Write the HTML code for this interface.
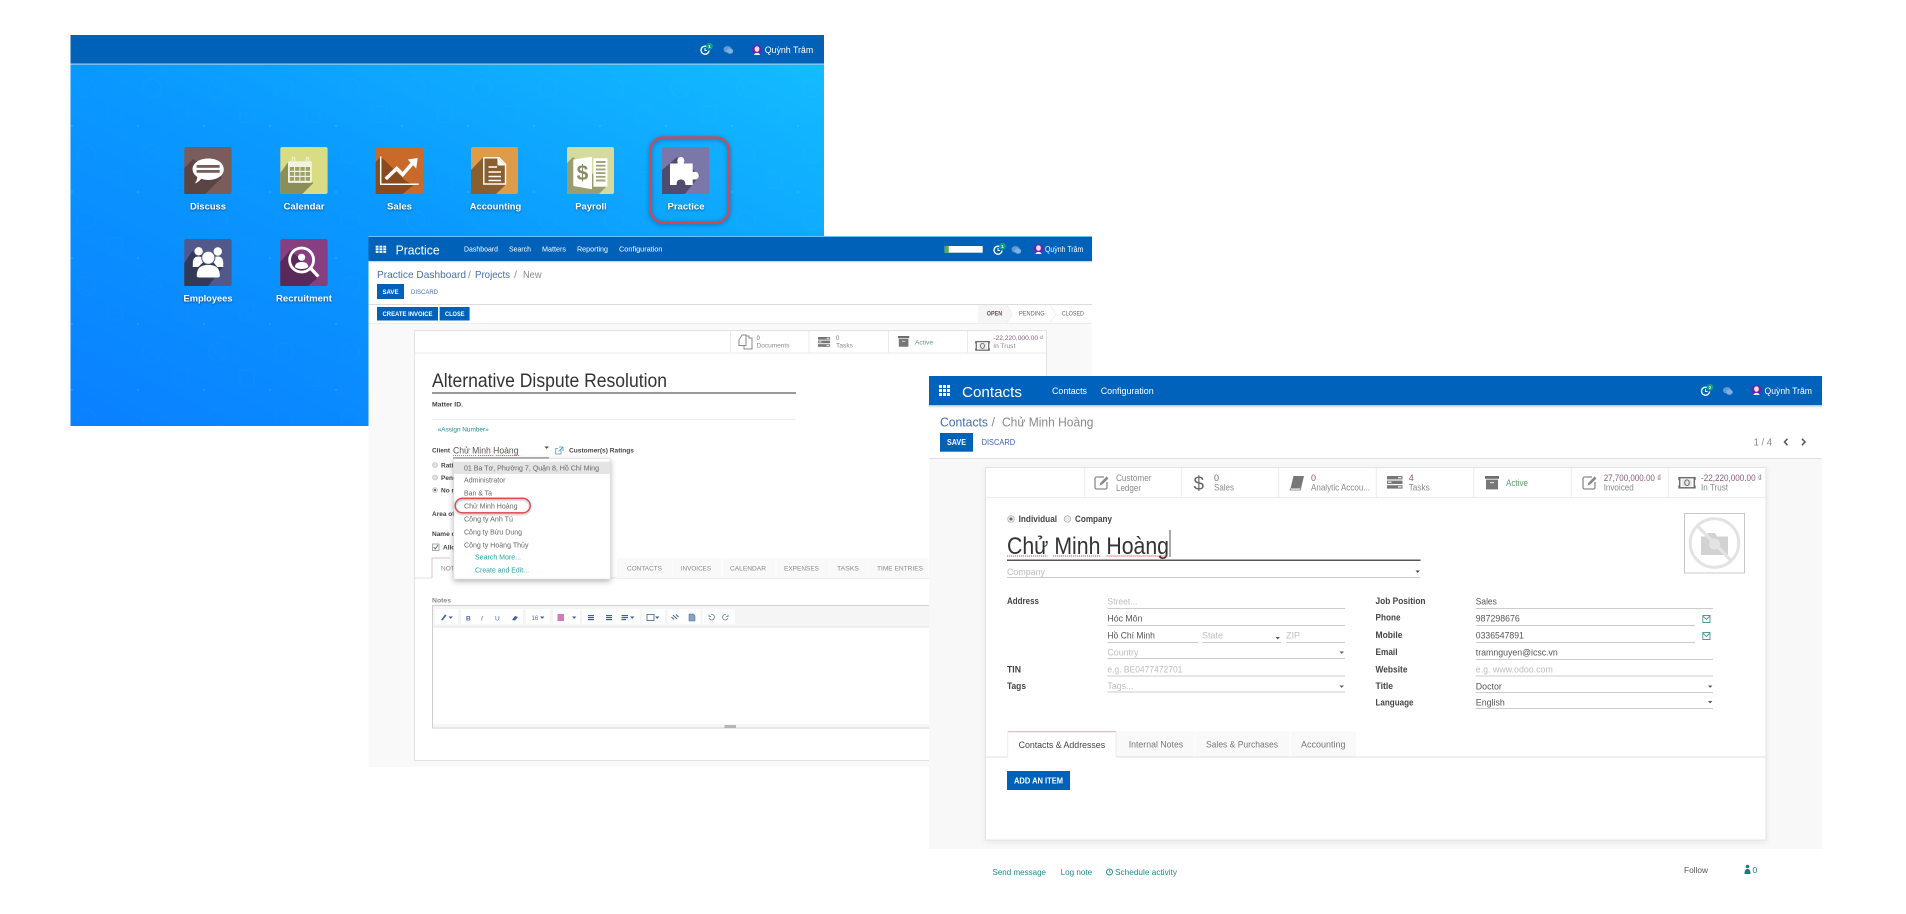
<!DOCTYPE html>
<html lang="vi"><head><meta charset="utf-8"><title>Practice</title>
<style>
html,body{margin:0;padding:0;background:#fff;width:1906px;height:914px;overflow:hidden}
svg{display:block;filter:blur(.25px)}
text{font-family:"Liberation Sans","DejaVu Sans",sans-serif;fill:#555}
.w{fill:#fff}.b{font-weight:bold}.lk{fill:#4a6cae}.t{fill:#1f8a8a}.nm{fill:#875a7b}.g{fill:#8a8a8a}.ph{fill:#bdbdbd}.d{fill:#444}
.hl{fill:#fff;font-weight:bold;font-size:9.5px;text-anchor:middle;filter:drop-shadow(0 1px 1px rgba(0,0,0,.45))}
.ln{stroke:#ccc;stroke-width:1;fill:none}
.bd{fill:#fff;font-size:4.500px;font-weight:bold}
</style></head><body>
<svg width="1906" height="914" viewBox="0 0 1906 914" xmlns="http://www.w3.org/2000/svg">
<defs>
<linearGradient id="bg" x1="0" y1="1" x2="1" y2="0"><stop offset="0" stop-color="#0a80ff"/><stop offset=".5" stop-color="#0a98ff"/><stop offset="1" stop-color="#13bcff"/></linearGradient>
<pattern id="pat" width="66" height="66" patternUnits="userSpaceOnUse"><circle cx="20" cy="22" r="9" fill="none" stroke="#fff" stroke-opacity=".02"/><rect x="42" y="40" width="14" height="16" fill="none" stroke="#fff" stroke-opacity=".02"/><circle cx="6" cy="60" r="1" fill="#fff" fill-opacity=".12"/></pattern>
<g id="grid"><rect x="0" y="0" width="3" height="3"/><rect x="4" y="0" width="3" height="3"/><rect x="8" y="0" width="3" height="3"/><rect x="0" y="4" width="3" height="3"/><rect x="4" y="4" width="3" height="3"/><rect x="8" y="4" width="3" height="3"/><rect x="0" y="8" width="3" height="3"/><rect x="4" y="8" width="3" height="3"/><rect x="8" y="8" width="3" height="3"/></g>
<g id="clock"><path d="M7 2.200A4 4 0 1 0 9 6" fill="none" stroke="#fff" stroke-width="1.400"/><path d="M5 3.400V6H7" fill="none" stroke="#fff" stroke-width="1"/><circle cx="9.500" cy="1.800" r="3.400" fill="#0f9d8a"/></g>
<g id="chat"><ellipse cx="4" cy="3.800" rx="4" ry="3.200" fill="#5f9bd6"/><ellipse cx="6.500" cy="5.600" rx="3.200" ry="2.700" fill="#7fb0df"/></g>
<g id="ava"><circle cx="5" cy="5" r="5" fill="#6a22b5"/><ellipse cx="5" cy="4" rx="2.400" ry="2.800" fill="#f3dcc8"/><path d="M2 10C2.400 7.200 7.600 7.200 8 10Z" fill="#f3f3f3"/></g>
<g id="edit"><path d="M10 2H2.500A1.500 1.500 0 0 0 1 3.500V12.500A1.500 1.500 0 0 0 2.500 14H11.500A1.500 1.500 0 0 0 13 12.500V7" fill="none" stroke="#8a8a8a" stroke-width="1.300"/><path d="M5.500 10.500L6.200 8 12.500 1.500 14.500 3.500 8 9.800Z" fill="#8a8a8a"/></g>
<g id="srv"><rect x="0" y="0" width="15.500" height="3.400" fill="#777"/><rect x="0" y="4.600" width="15.500" height="3.400" fill="#777"/><rect x="0" y="9.200" width="15.500" height="3.400" fill="#777"/><rect x="11" y="1" width="3.500" height="1.300" fill="#eee"/><rect x="1" y="5.600" width="3.500" height="1.300" fill="#eee"/><rect x="11" y="10.200" width="3.500" height="1.300" fill="#eee"/></g>
<g id="arch"><rect x="0" y="0" width="14" height="2.800" fill="#6f6f6f"/><rect x="1" y="3.600" width="12" height="9.800" fill="#777"/><rect x="5" y="6" width="4" height="1.200" fill="#ddd"/></g>
<g id="money"><rect x=".7" y=".7" width="14.600" height="10.100" fill="none" stroke="#6e6e6e" stroke-width="1.500"/><rect x="3" y="2.300" width="10" height="7" fill="#e9e9e9"/><ellipse cx="8" cy="5.800" rx="2.300" ry="2.900" fill="none" stroke="#666" stroke-width="1"/><path d="M-.2 0V3M-.2 8.500V11.500M16.200 0V3M16.200 8.500V11.500" stroke="#6e6e6e"/></g>
<path id="dn" d="M0 0H4.400L2.200 2.400Z"/>
</defs>

<!-- HOME WINDOW -->
<rect x="70.500" y="64" width="753.500" height="362" fill="url(#bg)"/>
<rect x="70.500" y="64" width="753.500" height="362" fill="url(#pat)"/>
<rect x="70.500" y="35" width="753.500" height="29" fill="#0061b8"/>
<rect x="70.500" y="63.500" width="753.500" height="1.200" fill="#a9cbe8"/>
<use href="#clock" x="700" y="44.500"/><text x="708.300" y="48" class="bd">1</text>
<use href="#chat" x="723.500" y="45.500"/>
<use href="#ava" x="752" y="45"/>
<text x="764.700" y="53.200" class="w" font-size="8.800" textLength="48.500" lengthAdjust="spacingAndGlyphs">Quỳnh Trâm</text>

<!-- Discuss -->
<g transform="translate(184.300 147)"><rect width="47.300" height="47" rx="2" fill="#7a5c5b"/><path d="M0 47V21L9 12 38 30 21 47Z" fill="#5b4444"/><path d="M24 11.500C33 11.500 39.500 16 39.500 22.300S33 33 24 33C21.500 33 19 32.600 17 31.800 15 34 13 35.800 10.500 36.500 12 34.500 12.800 32.500 13 30 10 28 8.300 25.300 8.300 22.300 8.300 16 15 11.500 24 11.500Z" fill="#fff"/><rect x="12.300" y="18" width="23" height="2.800" fill="#7a5c5b"/><rect x="12.300" y="23" width="23" height="2.800" fill="#7a5c5b"/></g>
<text x="208" y="209.300" class="hl" textLength="36" lengthAdjust="spacingAndGlyphs">Discuss</text>
<!-- Calendar -->
<g transform="translate(280.300 147)"><rect width="47.300" height="47" rx="2" fill="#d9dc82"/><path d="M0 47V26L8 15 33 36 22 47Z" fill="#8b8f57"/><rect x="12" y="10.500" width="2.500" height="6" rx="1" fill="none" stroke="#f2f2df" stroke-width="1"/><rect x="26" y="10.500" width="2.500" height="6" rx="1" fill="none" stroke="#f2f2df" stroke-width="1"/><rect x="7.700" y="14.300" width="23.800" height="21.600" rx="1" fill="#f2f2df"/><g fill="#9da166"><rect x="9.500" y="20" width="4.300" height="3.800"/><rect x="14.800" y="20" width="4.300" height="3.800"/><rect x="20.100" y="20" width="4.300" height="3.800"/><rect x="25.400" y="20" width="4.300" height="3.800"/><rect x="9.500" y="25" width="4.300" height="3.800"/><rect x="14.800" y="25" width="4.300" height="3.800"/><rect x="20.100" y="25" width="4.300" height="3.800"/><rect x="25.400" y="25" width="4.300" height="3.800"/><rect x="9.500" y="30" width="4.300" height="3.800"/><rect x="14.800" y="30" width="4.300" height="3.800"/><rect x="20.100" y="30" width="4.300" height="3.800"/><rect x="25.400" y="30" width="4.300" height="3.800"/></g></g>
<text x="304" y="209.300" class="hl" textLength="41" lengthAdjust="spacingAndGlyphs">Calendar</text>
<!-- Sales -->
<g transform="translate(375.700 147)"><rect width="47.300" height="47" rx="2" fill="#c9692a"/><path d="M0 47V15L5 9.500 30 34 38 38 27 47Z" fill="#8a491e"/><path d="M5 9.500V37.300H43" fill="none" stroke="#fff" stroke-width="1.500"/><path d="M10 32L21 21.500 27 27.500 37 16" fill="none" stroke="#fff" stroke-width="3.600"/><path d="M32 12.500L42 11 40.500 21.500Z" fill="#fff"/></g>
<text x="399.500" y="209.300" class="hl" textLength="25" lengthAdjust="spacingAndGlyphs">Sales</text>
<!-- Accounting -->
<g transform="translate(471 147)"><rect width="47" height="47" rx="2" fill="#de9c4a"/><path d="M0 47V23L12 10.500 35 37.500 25 47Z" fill="#8a5f30"/><path d="M12.800 10.800H28L34.500 17.300V37H12.800Z" fill="#8a5f30" stroke="#fff" stroke-width="1.400"/><path d="M27 11V18H34" fill="#fff" stroke="#fff" stroke-width="1"/><path d="M17.500 20H26M17.500 25H30M17.500 29.500H30M17.500 33.500H30" stroke="#fff" stroke-width="1.600"/></g>
<text x="495.500" y="209.300" class="hl" textLength="51.500" lengthAdjust="spacingAndGlyphs">Accounting</text>
<!-- Payroll -->
<g transform="translate(567 147)"><rect width="47" height="47" rx="2" fill="#d7da9f"/><path d="M0 47V16L6 10 40 39 32 47Z" fill="#9a9d70"/><path d="M6.300 12.500L25 9.700V42.200L6.300 39Z" fill="#fff"/><rect x="26.400" y="11.300" width="14" height="28.400" fill="#fff"/><path d="M29 15H38.500M29 18.700H38.500M29 22.400H38.500M29 26.100H38.500M29 29.800H38.500M29 33.500H38.500" stroke="#a3a67a" stroke-width="1.900"/><text x="15.500" y="33" font-size="21" font-weight="bold" text-anchor="middle" style="fill:#8a8d63">$</text></g>
<text x="591" y="209.300" class="hl" textLength="31.500" lengthAdjust="spacingAndGlyphs">Payroll</text>
<!-- Practice -->
<g transform="translate(662 147)"><rect width="47.300" height="47" rx="2" fill="#7c77a9"/><path d="M0 47V23L8 16.300 15 10 38 28 23 47Z" fill="#4f4c70"/><path d="M8 16.500H15.500C16 15.500 15.300 15 15.300 13.500A3.500 3.500 0 0 1 22.300 13.500C22.300 15 21.500 15.500 22 16.500H30.700V24.500C31.500 25.500 32 24.800 33 24.800A3.800 3.800 0 0 1 33 32.500C32 32.500 31.500 32 30.700 32.800V38H23.500C23.300 36.800 23.200 35.800 22.800 34.800 22 31.800 16 31.800 15 34.800 14.800 35.800 14.600 36.800 14.500 38H8Z" fill="#fff"/></g>
<text x="686" y="209.300" class="hl" textLength="37" lengthAdjust="spacingAndGlyphs">Practice</text>
<rect x="650.500" y="137.500" width="78.500" height="85" rx="13" fill="none" stroke="#d8464f" stroke-width="2.200" style="filter:drop-shadow(0 1px 2px rgba(0,0,0,.4))"/>
<!-- Employees -->
<g transform="translate(184.300 239)"><rect width="47.300" height="47" rx="2" fill="#50598a"/><path d="M0 47V24L8 12 40 26 24 47Z" fill="#323a5a"/><circle cx="14.300" cy="12.300" r="4.200" fill="#fff"/><circle cx="33.500" cy="12.500" r="4.200" fill="#fff"/><path d="M8.500 24.500C8.500 19 11 17.500 14 17.500S20 19 20 22L14 28H8.500ZM39 24.500C39 19 36.500 17.500 33.500 17.500S28 19 28 22L33 28H39Z" fill="#fff"/><circle cx="24" cy="18.700" r="6.600" fill="#fff" stroke="#50598a"/><path d="M12.500 37C12.500 30 15 26 24 26S35.500 30 35.500 37C35.500 38 34.500 38.500 33 38.500H15C13.500 38.500 12.500 38 12.500 37Z" fill="#fff"/></g>
<text x="208" y="301.300" class="hl" textLength="49" lengthAdjust="spacingAndGlyphs">Employees</text>
<!-- Recruitment -->
<g transform="translate(280.300 239)"><rect width="47.300" height="47" rx="2" fill="#873f82"/><path d="M0 47V23L10 11 30 30 38 38 28 47Z" fill="#59295a"/><circle cx="21.300" cy="21" r="12" fill="none" stroke="#fff" stroke-width="2.800"/><circle cx="21.300" cy="18.300" r="3.600" fill="#fff"/><path d="M14.500 28C15 23.800 18 23 21.300 23S27.600 23.800 28 28C26 29.500 23.800 30 21.300 30S16.500 29.500 14.500 28Z" fill="#fff"/><path d="M30.500 29.500L38 37.500" stroke="#fff" stroke-width="3.200"/></g>
<text x="304" y="301.300" class="hl" textLength="56" lengthAdjust="spacingAndGlyphs">Recruitment</text>

<!-- PRACTICE WINDOW -->
<rect x="368.500" y="236.500" width="723.500" height="530.500" fill="#fff"/>
<rect x="368.500" y="323" width="723.500" height="444" fill="#f9f9f9"/>
<rect x="368.500" y="236.500" width="723.500" height="24.500" fill="#0061b8"/>
<rect x="368.500" y="236" width="723.500" height="1" fill="#69c2f5"/>
<rect x="368.500" y="261" width="723.500" height="1.300" fill="#d6d6d6"/>
<g transform="translate(375.700 245.700) scale(.95 .65)" fill="#fff"><use href="#grid"/></g>
<text x="395.600" y="254.500" class="w" font-size="12.500" textLength="44" lengthAdjust="spacingAndGlyphs">Practice</text>
<g font-size="7.500"><text x="464" y="251.600" class="w" textLength="34" lengthAdjust="spacingAndGlyphs">Dashboard</text><text x="509" y="251.600" class="w" textLength="22" lengthAdjust="spacingAndGlyphs">Search</text><text x="542" y="251.600" class="w" textLength="24" lengthAdjust="spacingAndGlyphs">Matters</text><text x="577" y="251.600" class="w" textLength="31" lengthAdjust="spacingAndGlyphs">Reporting</text><text x="619" y="251.600" class="w" textLength="43.500" lengthAdjust="spacingAndGlyphs">Configuration</text></g>
<rect x="944.700" y="246" width="38" height="6.700" fill="#fff"/><rect x="944.700" y="246" width="4" height="6.700" fill="#4caf50"/>
<use href="#clock" x="993" y="244.500"/><text x="1001.300" y="248" class="bd">1</text>
<use href="#chat" x="1011.500" y="245.500"/>
<use href="#ava" x="1033.500" y="244"/>
<text x="1045" y="252" class="w" font-size="7.800" textLength="38.300" lengthAdjust="spacingAndGlyphs">Quỳnh Trâm</text>

<text x="377" y="277.800" class="lk" font-size="10.500" textLength="89" lengthAdjust="spacingAndGlyphs">Practice Dashboard</text>
<text x="468" y="277.800" class="g" font-size="10.500">/</text>
<text x="475" y="277.800" class="lk" font-size="10.500" textLength="35" lengthAdjust="spacingAndGlyphs">Projects</text>
<text x="514" y="277.800" class="g" font-size="10.500">/</text>
<text x="523" y="277.800" class="g" font-size="10.500" textLength="18.500" lengthAdjust="spacingAndGlyphs">New</text>
<rect x="377" y="284" width="27" height="15" fill="#0061b8"/>
<text x="382.500" y="294" class="w b" font-size="6.800" textLength="16" lengthAdjust="spacingAndGlyphs">SAVE</text>
<text x="411" y="294" class="lk" font-size="6.800" textLength="27" lengthAdjust="spacingAndGlyphs">DISCARD</text>
<rect x="368.500" y="304" width="723.500" height="1" fill="#dcdcdc"/>
<rect x="368.500" y="323" width="723.500" height="1" fill="#ededed"/>
<rect x="377" y="307" width="61" height="13.500" fill="#0061b8"/>
<rect x="439.600" y="307" width="30" height="13.500" fill="#0061b8"/>
<text x="382.500" y="316" class="w b" font-size="6.500" textLength="50" lengthAdjust="spacingAndGlyphs">CREATE INVOICE</text>
<text x="445" y="316" class="w b" font-size="6.500" textLength="19.500" lengthAdjust="spacingAndGlyphs">CLOSE</text>
<path d="M978 305H1007L1012 314 1007 323H978Z" fill="#f6f6f6"/>
<path d="M1007 305L1012 314 1007 323M1050 305L1056 314 1050 323" stroke="#efefef" fill="none"/>
<text x="986.700" y="315.500" class="nm" font-size="6" textLength="15.500" lengthAdjust="spacingAndGlyphs" style="fill:#6b4a63;font-weight:bold">OPEN</text>
<text x="1019" y="315.500" class="g" font-size="6" textLength="25.700" lengthAdjust="spacingAndGlyphs" style="fill:#666">PENDING</text>
<text x="1061.700" y="315.500" class="g" font-size="6" textLength="22.300" lengthAdjust="spacingAndGlyphs" style="fill:#666">CLOSED</text>

<!-- practice sheet -->
<rect x="414.500" y="330.500" width="632" height="430" fill="#fff" stroke="#e2e2e2"/>
<path d="M414.500 353H1046.500M730.500 330.500V353M809 330.500V353M888.500 330.500V353M967.500 330.500V353" stroke="#ebebeb" fill="none"/>
<path d="M739 340L742 335H746V345.500H739ZM746.500 336H749V338H752V349H744V345.500" fill="none" stroke="#888" stroke-width="1"/>
<text x="756.500" y="340.200" class="nm" font-size="6">0</text><text x="756.500" y="347.500" class="g" font-size="6.500" textLength="33" lengthAdjust="spacingAndGlyphs">Documents</text>
<use href="#srv" transform="translate(818 337) scale(.78)"/>
<text x="836" y="340.200" class="nm" font-size="6">0</text><text x="836" y="347.500" class="g" font-size="6.500" textLength="17" lengthAdjust="spacingAndGlyphs">Tasks</text>
<use href="#arch" transform="translate(898 336) scale(.8)"/>
<text x="915" y="344.500" font-size="6.500" style="fill:#5f9b6a" textLength="18" lengthAdjust="spacingAndGlyphs">Active</text>
<use href="#money" transform="translate(975.700 341) scale(.85)"/>
<text x="993.300" y="340.200" class="nm" font-size="6.500" textLength="50" lengthAdjust="spacingAndGlyphs">-22,220,000.00 ₫</text>
<text x="993.300" y="347.800" class="g" font-size="6.500" textLength="22" lengthAdjust="spacingAndGlyphs">In Trust</text>

<text x="432" y="386.800" font-size="19.500" style="fill:#333" textLength="235" lengthAdjust="spacingAndGlyphs">Alternative Dispute Resolution</text>
<rect x="432" y="392" width="364" height="2" fill="#999"/>
<text x="432" y="406.300" class="d b" font-size="6.500" textLength="31" lengthAdjust="spacingAndGlyphs">Matter ID.</text>
<rect x="432" y="419" width="364" height="1" fill="#eee"/>
<text x="437.700" y="431.300" class="t" font-size="6.500" textLength="51" lengthAdjust="spacingAndGlyphs">«Assign Number»</text>
<text x="432" y="452.300" class="d b" font-size="6.500" textLength="18" lengthAdjust="spacingAndGlyphs">Client</text>
<text x="453" y="453.300" font-size="9.500" textLength="65.500" lengthAdjust="spacingAndGlyphs">Chử Minh Hoàng</text>
<path d="M453 455.500H476M478 455.500H494M496 455.500H519" stroke="#e23b3b" stroke-width=".8" stroke-dasharray="1 1"/>
<rect x="453" y="457.500" width="96" height="1" fill="#666"/>
<use href="#dn" x="544.500" y="446.500" fill="#444"/>
<path d="M561 448.500V454H555.700V448.700H558M559 447H563V451M563 447L558.500 451.500" stroke="#5a8fc0" fill="none" stroke-width=".8"/>
<text x="569" y="452.300" class="d b" font-size="6.500" textLength="65" lengthAdjust="spacingAndGlyphs">Customer(s) Ratings</text>
<g fill="#e0e0e0" stroke="#bbb" stroke-width=".6"><circle cx="435" cy="465" r="2.500"/><circle cx="435" cy="477.500" r="2.500"/><circle cx="435" cy="490" r="2.500"/></g><circle cx="435" cy="490" r="1.100" fill="#666"/>
<g font-size="6.500"><text x="441" y="467.300" class="d b">Rating</text><text x="441" y="479.800" class="d b">Pending</text><text x="441" y="492.300" class="d b">No rating</text><text x="432" y="516" class="d b">Area of Law</text><text x="432" y="536" class="d b">Name of Case</text><text x="443" y="549.300" class="d b">Allow</text></g>
<rect x="432.500" y="544" width="6.500" height="6.500" fill="#fff" stroke="#888" stroke-width=".7"/><path d="M433.700 547L435.300 549 438 545" stroke="#555" fill="none" stroke-width=".8"/>
<path d="M414.500 578H929" stroke="#e2e2e2"/>
<rect x="432" y="558" width="40" height="20.500" fill="#fff"/><path d="M432 578V558H450" stroke="#d8c0d0" fill="none"/>
<g fill="#f9f9f9"><rect x="617" y="558" width="55" height="20"/><rect x="672.500" y="558" width="49" height="20"/><rect x="722.500" y="558" width="53" height="20"/><rect x="776.500" y="558" width="53" height="20"/><rect x="830" y="558" width="38" height="20"/><rect x="868.500" y="558" width="60" height="20"/></g>
<text x="441" y="570.300" class="g" font-size="6.500">NOTES</text>
<g font-size="6.500"><text x="627" y="570.300" class="g" textLength="35" lengthAdjust="spacingAndGlyphs">CONTACTS</text><text x="680.700" y="570.300" class="g" textLength="30.500" lengthAdjust="spacingAndGlyphs">INVOICES</text><text x="730" y="570.300" class="g" textLength="36" lengthAdjust="spacingAndGlyphs">CALENDAR</text><text x="784" y="570.300" class="g" textLength="35" lengthAdjust="spacingAndGlyphs">EXPENSES</text><text x="837" y="570.300" class="g" textLength="22" lengthAdjust="spacingAndGlyphs">TASKS</text><text x="877" y="570.300" class="g" textLength="46" lengthAdjust="spacingAndGlyphs">TIME ENTRIES</text></g>
<text x="432" y="602.300" class="g b" font-size="6.500" textLength="19" lengthAdjust="spacingAndGlyphs">Notes</text>
<rect x="432.500" y="605.500" width="510" height="122.500" fill="#fff" stroke="#cfcfcf"/>
<rect x="433" y="606" width="509" height="20.500" fill="#f5f5f5"/>
<rect x="433" y="626.500" width="509" height="1" fill="#e6e6e6"/>
<rect x="433" y="724" width="509" height="3.600" fill="#f5f5f5"/>
<rect x="724.500" y="725" width="11.500" height="3" fill="#b5b5b5"/>
<g fill="#fff"><rect x="435" y="609" width="23" height="15"/><rect x="461" y="609" width="62" height="15"/><rect x="526" y="609" width="24" height="15"/><rect x="553" y="609" width="27" height="15"/><rect x="582.300" y="609" width="57.500" height="15"/><rect x="642" y="609" width="23" height="15"/><rect x="667.700" y="609" width="32.500" height="15"/><rect x="702.500" y="609" width="32.500" height="15"/></g>
<g fill="#3d5f94"><path d="M441 620L445 614.500 446.500 615.500 442.500 620.500Z"/><use href="#dn" x="448.500" y="616.500"/><use href="#dn" x="540" y="616.500"/><use href="#dn" x="572" y="616.500"/><use href="#dn" x="630" y="616.500"/><use href="#dn" x="655" y="616.500"/><rect x="588" y="615" width="6" height="1.200"/><rect x="588" y="617" width="6" height="1.200"/><rect x="588" y="619" width="6" height="1.200"/><rect x="606" y="615" width="6" height="1.200"/><rect x="606" y="617" width="6" height="1.200"/><rect x="606" y="619" width="6" height="1.200"/><rect x="621.500" y="615" width="6.500" height="1.200"/><rect x="621.500" y="617" width="6.500" height="1.200"/><rect x="621.500" y="619" width="4.500" height="1.200"/><rect x="647" y="614.500" width="7" height="6" fill="none" stroke="#3d5f94" stroke-width=".8"/><path d="M512 620L515 616 518 617 515 620.500Z"/></g>
<text x="466" y="620.500" font-size="6.500" class="lk b">B</text><text x="481" y="620.500" font-size="6.500" class="lk" font-style="italic">I</text><text x="495" y="620.500" font-size="6.500" class="lk">U</text><text x="531.500" y="620" font-size="6" class="lk">16</text>
<rect x="557.500" y="614" width="6.500" height="7" fill="#d679b9"/>
<path d="M673 615L677 619M676 614.500L678.500 617M671.500 617L674 619.500" stroke="#3d5f94" fill="none"/><path d="M689 614H693.500L695 615.500V621H689Z" fill="#8aa2c6" stroke="#3d5f94" stroke-width=".5"/>
<path d="M711 614.500A2.800 2.800 0 1 1 709 618M709 614.500V616.500H711M726 614.500A2.800 2.800 0 1 0 728 618M728 614.500V616.500H726" stroke="#5f7ba6" fill="none" stroke-width=".8"/>

<!-- dropdown -->
<rect x="453.800" y="458.700" width="156.400" height="120.300" fill="#fff" stroke="#e2e2e2" stroke-width=".7" style="filter:drop-shadow(0 2px 3px rgba(0,0,0,.3))"/>
<rect x="454" y="461.700" width="156" height="12.300" fill="#e4e4e4"/>
<g font-size="7.500"><text x="464" y="470.500" textLength="135" lengthAdjust="spacingAndGlyphs" style="fill:#666">01 Ba Tơ, Phường 7, Quận 8, Hồ Chí Ming</text><text x="464" y="482.600" style="fill:#666" textLength="41.500" lengthAdjust="spacingAndGlyphs">Administrator</text><text x="464" y="495.600" style="fill:#666" textLength="28" lengthAdjust="spacingAndGlyphs">Ban &amp; Ta</text><text x="464" y="508.600" style="fill:#666" textLength="53.500" lengthAdjust="spacingAndGlyphs">Chử Minh Hoàng</text><text x="464" y="521.300" style="fill:#666" textLength="49" lengthAdjust="spacingAndGlyphs">Công ty Anh Tú</text><text x="464" y="534.600" style="fill:#666" textLength="58" lengthAdjust="spacingAndGlyphs">Công ty Bửu Dung</text><text x="464" y="547.300" style="fill:#666" textLength="64.500" lengthAdjust="spacingAndGlyphs">Công ty Hoàng Thủy</text><text x="475" y="559.600" textLength="46" lengthAdjust="spacingAndGlyphs" style="fill:#26a69a">Search More...</text><text x="475" y="572.600" textLength="54" lengthAdjust="spacingAndGlyphs" style="fill:#26a69a">Create and Edit...</text></g>
<rect x="455.200" y="498.300" width="75" height="14.500" rx="7.200" fill="none" stroke="#e0444c" stroke-width="1.300" style="filter:drop-shadow(0 1px 1px rgba(0,0,0,.4))"/>

<!-- CONTACTS WINDOW -->
<rect x="929" y="376" width="893" height="538" fill="#fff"/>
<rect x="929" y="459" width="893" height="390" fill="#f8f8f8"/>
<rect x="929" y="376" width="893" height="29" fill="#0062ba"/>
<rect x="929" y="405" width="893" height="1.500" fill="#cacaca"/>
<rect x="929" y="406.500" width="893" height="2" fill="#f4f4f4"/>
<use href="#grid" transform="translate(939 385)" fill="#fff"/>
<text x="962" y="397.200" class="w" font-size="14.500" textLength="60" lengthAdjust="spacingAndGlyphs">Contacts</text>
<text x="1052" y="393.800" class="w" font-size="9" textLength="35" lengthAdjust="spacingAndGlyphs">Contacts</text>
<text x="1100.700" y="393.800" class="w" font-size="9" textLength="53" lengthAdjust="spacingAndGlyphs">Configuration</text>
<use href="#clock" x="1700.500" y="385.500"/><text x="1708.800" y="389" class="bd">2</text>
<use href="#chat" x="1723" y="386.500"/>
<use href="#ava" x="1751.500" y="385"/>
<text x="1764.500" y="394" class="w" font-size="9" textLength="47.500" lengthAdjust="spacingAndGlyphs">Quỳnh Trâm</text>

<text x="940" y="426.500" class="lk" font-size="12.500" textLength="48" lengthAdjust="spacingAndGlyphs">Contacts</text>
<text x="991.500" y="426.500" class="g" font-size="12.500">/</text>
<text x="1002" y="426.500" class="g" font-size="12.500" textLength="91.500" lengthAdjust="spacingAndGlyphs">Chử Minh Hoàng</text>
<rect x="940" y="433" width="33" height="18.700" fill="#0061b8"/>
<text x="947" y="445.200" class="w b" font-size="8" textLength="19" lengthAdjust="spacingAndGlyphs">SAVE</text>
<text x="981.600" y="445.200" font-size="8" textLength="33.500" lengthAdjust="spacingAndGlyphs" style="fill:#3f62b0">DISCARD</text>
<text x="1753.600" y="445.500" class="g" font-size="10" textLength="18.500" lengthAdjust="spacingAndGlyphs">1 / 4</text>
<path d="M1787.500 438.800L1784.500 442 1787.500 445.200M1802 438.800L1805 442 1802 445.200" stroke="#555" stroke-width="1.500" fill="none"/>
<rect x="929" y="458" width="893" height="1" fill="#e0e0e0"/>

<rect x="985.500" y="467.500" width="780.500" height="372.500" fill="#fff" stroke="#e4e4e4" style="filter:drop-shadow(0 2px 3px rgba(0,0,0,.06))"/>
<path d="M985.500 497.500H1766M1084.700 468V497M1181.300 468V497M1278.700 468V497M1376.300 468V497M1473.700 468V497M1571.300 468V497M1668.300 468V497" stroke="#ececec" fill="none"/>
<use href="#edit" transform="translate(1094 475)"/>
<text x="1116" y="481" class="g" font-size="9" textLength="35.500" lengthAdjust="spacingAndGlyphs">Customer</text>
<text x="1116" y="491" class="g" font-size="9" textLength="25" lengthAdjust="spacingAndGlyphs">Ledger</text>
<text x="1193.500" y="490" font-size="19" style="fill:#666">$</text>
<text x="1214" y="481" class="nm" font-size="9">0</text><text x="1214" y="490.300" class="g" font-size="9" textLength="20" lengthAdjust="spacingAndGlyphs">Sales</text>
<path d="M1293.500 476H1304L1301 488.500H1290.500Z" fill="#777"/><path d="M1290.500 488.500L1290 490H1300.500L1301 488.500" fill="none" stroke="#777" stroke-width=".8"/>
<text x="1311" y="481" class="nm" font-size="9">0</text><text x="1311" y="490.300" class="g" font-size="9" textLength="59" lengthAdjust="spacingAndGlyphs">Analytic Accou...</text>
<use href="#srv" x="1387" y="476"/>
<text x="1408.700" y="481" class="nm" font-size="9">4</text><text x="1408.700" y="490.300" class="g" font-size="9" textLength="21" lengthAdjust="spacingAndGlyphs">Tasks</text>
<use href="#arch" x="1485" y="476"/>
<text x="1506" y="486" font-size="9" style="fill:#5f9b6a" textLength="22" lengthAdjust="spacingAndGlyphs">Active</text>
<use href="#edit" x="1582" y="475"/>
<text x="1603.700" y="481" class="nm" font-size="9" textLength="57.500" lengthAdjust="spacingAndGlyphs">27,700,000.00 ₫</text>
<text x="1603.700" y="490.300" class="g" font-size="9" textLength="30" lengthAdjust="spacingAndGlyphs">Invoiced</text>
<use href="#money" x="1679" y="477"/>
<text x="1701" y="481" class="nm" font-size="9" textLength="61" lengthAdjust="spacingAndGlyphs">-22,220,000.00 ₫</text>
<text x="1701" y="490.300" class="g" font-size="9" textLength="27" lengthAdjust="spacingAndGlyphs">In Trust</text>

<circle cx="1011" cy="519" r="3.300" fill="#eee" stroke="#aaa" stroke-width=".7"/><circle cx="1011" cy="519" r="1.500" fill="#666"/>
<circle cx="1067.400" cy="519" r="3.300" fill="#e8e8e8" stroke="#aaa" stroke-width=".7"/>
<text x="1018.600" y="522" class="d" font-size="8.800" font-weight="bold" textLength="38.500" lengthAdjust="spacingAndGlyphs">Individual</text>
<text x="1075" y="522" class="d" font-size="8.800" font-weight="bold" textLength="37" lengthAdjust="spacingAndGlyphs">Company</text>
<text x="1007" y="554" font-size="24" style="fill:#333" textLength="162" lengthAdjust="spacingAndGlyphs">Chử Minh Hoàng</text>
<path d="M1007 556H1047.500M1053 556H1101M1106.500 556H1168" stroke="#e23b3b" stroke-width="1" stroke-dasharray="1.200 .8"/>
<rect x="1169.500" y="530" width="1" height="27" fill="#555"/>
<rect x="1007" y="559.500" width="413.500" height="1.500" fill="#555"/>
<text x="1007" y="575" class="ph" font-size="9.500" textLength="38" lengthAdjust="spacingAndGlyphs">Company</text>
<use href="#dn" x="1415.500" y="570.500" fill="#444"/>
<rect x="1007" y="577" width="413.500" height="1" fill="#ccc"/>
<rect x="1684.500" y="513.500" width="60" height="59.500" fill="#fff" stroke="#c8c8c8"/>
<circle cx="1714.500" cy="543" r="24.300" fill="none" stroke="#e3e3e3" stroke-width="3"/>
<path d="M1701 536.500H1706L1708 533H1715L1717 536.500H1728V555H1701Z" fill="#d2d2d2"/><circle cx="1714.500" cy="544" r="5.500" fill="#e3e3e3"/>
<path d="M1697.500 526L1731.500 561" stroke="#e3e3e3" stroke-width="3.200"/>

<g font-size="9" font-weight="bold"><text x="1007" y="604" class="d" textLength="32" lengthAdjust="spacingAndGlyphs">Address</text><text x="1007" y="672.300" class="d" textLength="14" lengthAdjust="spacingAndGlyphs">TIN</text><text x="1007" y="689" class="d" textLength="19" lengthAdjust="spacingAndGlyphs">Tags</text><text x="1375.500" y="604" class="d" textLength="50" lengthAdjust="spacingAndGlyphs">Job Position</text><text x="1375.500" y="620.500" class="d" textLength="25" lengthAdjust="spacingAndGlyphs">Phone</text><text x="1375.500" y="637.800" class="d" textLength="27" lengthAdjust="spacingAndGlyphs">Mobile</text><text x="1375.500" y="655" class="d" textLength="22" lengthAdjust="spacingAndGlyphs">Email</text><text x="1375.500" y="672.300" class="d" textLength="32" lengthAdjust="spacingAndGlyphs">Website</text><text x="1375.500" y="689" class="d" textLength="17.500" lengthAdjust="spacingAndGlyphs">Title</text><text x="1375.500" y="705.500" class="d" textLength="38" lengthAdjust="spacingAndGlyphs">Language</text></g>
<g font-size="9"><text x="1107.400" y="604.500" class="ph" textLength="30" lengthAdjust="spacingAndGlyphs">Street...</text><text x="1107.400" y="621.500" textLength="35" lengthAdjust="spacingAndGlyphs">Hóc Môn</text><text x="1107.400" y="638.500" textLength="47.500" lengthAdjust="spacingAndGlyphs">Hồ Chí Minh</text><text x="1202" y="638.500" class="ph" textLength="21" lengthAdjust="spacingAndGlyphs">State</text><text x="1286" y="638.500" class="ph" textLength="14" lengthAdjust="spacingAndGlyphs">ZIP</text><text x="1107.400" y="655.500" class="ph" textLength="31" lengthAdjust="spacingAndGlyphs">Country</text><text x="1107.400" y="672.500" class="ph" textLength="75" lengthAdjust="spacingAndGlyphs">e.g. BE0477472701</text><text x="1107.400" y="689" class="ph" textLength="26" lengthAdjust="spacingAndGlyphs">Tags...</text>
<text x="1475.800" y="604.500" textLength="21" lengthAdjust="spacingAndGlyphs">Sales</text><text x="1475.800" y="621.500" textLength="44" lengthAdjust="spacingAndGlyphs">987298676</text><text x="1475.800" y="638.500" textLength="48" lengthAdjust="spacingAndGlyphs">0336547891</text><text x="1475.800" y="655.500" textLength="82" lengthAdjust="spacingAndGlyphs">tramnguyen@icsc.vn</text><text x="1475.800" y="672.500" class="ph" textLength="77" lengthAdjust="spacingAndGlyphs">e.g. www.odoo.com</text><text x="1475.800" y="689.500" textLength="26" lengthAdjust="spacingAndGlyphs">Doctor</text><text x="1475.800" y="705.500" textLength="29" lengthAdjust="spacingAndGlyphs">English</text></g>
<g fill="#ccc"><rect x="1107.400" y="608" width="237.600" height="1"/><rect x="1107.400" y="625" width="237.600" height="1"/><rect x="1107.400" y="642" width="91" height="1"/><rect x="1202" y="642" width="79" height="1"/><rect x="1286" y="642" width="59" height="1"/><rect x="1107.400" y="658" width="237.600" height="1"/><rect x="1107.400" y="675.500" width="237.600" height="1"/><rect x="1107.400" y="691.500" width="237.600" height="1"/><rect x="1475.800" y="608" width="237.200" height="1"/><rect x="1475.800" y="625" width="219.200" height="1"/><rect x="1475.800" y="642" width="219.200" height="1"/><rect x="1475.800" y="659" width="237.200" height="1"/><rect x="1475.800" y="675.500" width="237.200" height="1"/><rect x="1475.800" y="692" width="237.200" height="1"/><rect x="1475.800" y="708" width="237.200" height="1"/></g>
<g fill="#555"><use href="#dn" x="1275.500" y="637"/><use href="#dn" x="1339.500" y="651.500"/><use href="#dn" x="1339.500" y="685.500"/><use href="#dn" x="1708" y="685.500"/><use href="#dn" x="1708" y="701"/></g>
<path d="M1702.800 615.500H1710V622.500H1702.800ZM1702.800 616L1706.400 619.500 1710 616" fill="none" stroke="#4a9a9a" stroke-width=".9"/>
<path d="M1702.800 632.500H1710V639.500H1702.800ZM1702.800 633L1706.400 636.500 1710 633" fill="none" stroke="#4a9a9a" stroke-width=".9"/>

<path d="M985.500 757H1766" stroke="#e0e0e0"/>
<g fill="#f9f9f9"><rect x="1116.500" y="731.500" width="78" height="25"/><rect x="1195.500" y="731.500" width="94.500" height="25"/><rect x="1291" y="731.500" width="65" height="25"/></g>
<rect x="1007.700" y="731.500" width="108.300" height="26" fill="#fff"/>
<rect x="1007.700" y="731" width="108.300" height="1.300" fill="#d8c0d0"/>
<path d="M1007.700 732V757M1116 732V757" stroke="#ececec"/>
<text x="1018.600" y="748.200" font-size="9" textLength="86.500" lengthAdjust="spacingAndGlyphs" style="fill:#444">Contacts &amp; Addresses</text>
<text x="1128.700" y="747.300" font-size="9" textLength="54.500" lengthAdjust="spacingAndGlyphs" style="fill:#777">Internal Notes</text>
<text x="1206" y="747.300" font-size="9" textLength="72" lengthAdjust="spacingAndGlyphs" style="fill:#777">Sales &amp; Purchases</text>
<text x="1301" y="747.300" font-size="9" textLength="44.500" lengthAdjust="spacingAndGlyphs" style="fill:#777">Accounting</text>
<rect x="1007" y="771" width="63" height="19" fill="#0061b8"/>
<text x="1014" y="783.500" class="w b" font-size="8" textLength="49" lengthAdjust="spacingAndGlyphs">ADD AN ITEM</text>

<text x="992.500" y="875" class="t" font-size="8.500" textLength="53.500" lengthAdjust="spacingAndGlyphs">Send message</text>
<text x="1060.600" y="875" class="t" font-size="8.500" textLength="31.500" lengthAdjust="spacingAndGlyphs">Log note</text>
<circle cx="1109.500" cy="872" r="3" fill="none" stroke="#1f8a8a" stroke-width=".9"/><path d="M1109.500 870V872.200H1111" stroke="#1f8a8a" fill="none" stroke-width=".7"/>
<text x="1115" y="875" class="t" font-size="8.500" textLength="62" lengthAdjust="spacingAndGlyphs">Schedule activity</text>
<text x="1684" y="873" font-size="8.500" textLength="24" lengthAdjust="spacingAndGlyphs">Follow</text>
<circle cx="1747.500" cy="866.500" r="1.800" fill="#137f7f"/><path d="M1744.500 874C1744.500 869.500 1746 869 1747.500 869S1750.500 869.500 1750.500 874Z" fill="#137f7f"/>
<text x="1752.500" y="873" font-size="8.500" style="fill:#137f7f">0</text>
</svg>
</body></html>
